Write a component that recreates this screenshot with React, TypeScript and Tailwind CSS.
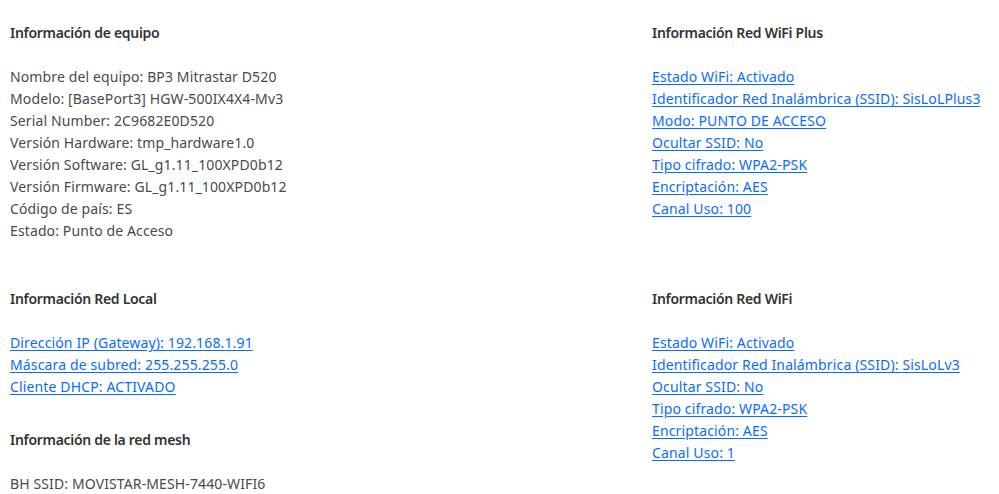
const equipo = [
  "Nombre del equipo: BP3 Mitrastar D520",
  "Modelo: [BasePort3] HGW-500IX4X4-Mv3",
  "Serial Number: 2C9682E0D520",
  "Versión Hardware: tmp_hardware1.0",
  "Versión Software: GL_g1.11_100XPD0b12",
  "Versión Firmware: GL_g1.11_100XPD0b12",
  "Código de país: ES",
  "Estado: Punto de Acceso",
];

const redLocal = [
  "Dirección IP (Gateway): 192.168.1.91",
  "Máscara de subred: 255.255.255.0",
  "Cliente DHCP: ACTIVADO",
];

const wifiPlus = [
  "Estado WiFi: Activado",
  "Identificador Red Inalámbrica (SSID): SisLoLPlus3",
  "Modo: PUNTO DE ACCESO",
  "Ocultar SSID: No",
  "Tipo cifrado: WPA2-PSK",
  "Encriptación: AES",
  "Canal Uso: 100",
];

const wifi = [
  "Estado WiFi: Activado",
  "Identificador Red Inalámbrica (SSID): SisLoLv3",
  "Ocultar SSID: No",
  "Tipo cifrado: WPA2-PSK",
  "Encriptación: AES",
  "Canal Uso: 1",
];

// section title
const Title = ({ text }: { text: string }) => (
  <h3 className="text-[14px] leading-[22px] font-semibold tracking-[-0.3px] text-[#333333] mb-[22px]">
    {text}
  </h3>
);

const Lines = ({ items }: { items: string[] }) => (
  <div>
    {items.map((t) => (
      <p key={t} className="text-[14px] leading-[22px] tracking-[0.12px] text-[#4a4a4a]">
        {t}
      </p>
    ))}
  </div>
);

const Links = ({ items }: { items: string[] }) => (
  <div className="flex flex-col items-start">
    {items.map((t) => (
      <a
        key={t}
        href="#"
        className="text-[14px] leading-[22px] tracking-[0.14px] text-[#0b6bff] underline underline-offset-2"
      >
        {t}
      </a>
    ))}
  </div>
);

export default function App() {
  return (
    <div
      className="w-[999px] h-[494px] overflow-hidden bg-white pl-[10px] pt-[22px]"
      style={{ fontFamily: '"Noto Sans", "Open Sans", sans-serif' }}
    >
      <div className="grid grid-cols-[642px_1fr]">
        {/* left top */}
        <div>
          <Title text="Información de equipo" />
          <Lines items={equipo} />
        </div>
        {/* right top */}
        <div>
          <Title text="Información Red WiFi Plus" />
          <Links items={wifiPlus} />
        </div>

        {/* left bottom */}
        <div className="mt-[46px]">
          <Title text="Información Red Local" />
          <Links items={redLocal} />
          <div className="mt-[31px]">
            <Title text="Información de la red mesh" />
            <Lines items={["BH SSID: MOVISTAR-MESH-7440-WIFI6"]} />
          </div>
        </div>
        {/* right bottom */}
        <div className="mt-[46px]">
          <Title text="Información Red WiFi" />
          <Links items={wifi} />
        </div>
      </div>
    </div>
  );
}
